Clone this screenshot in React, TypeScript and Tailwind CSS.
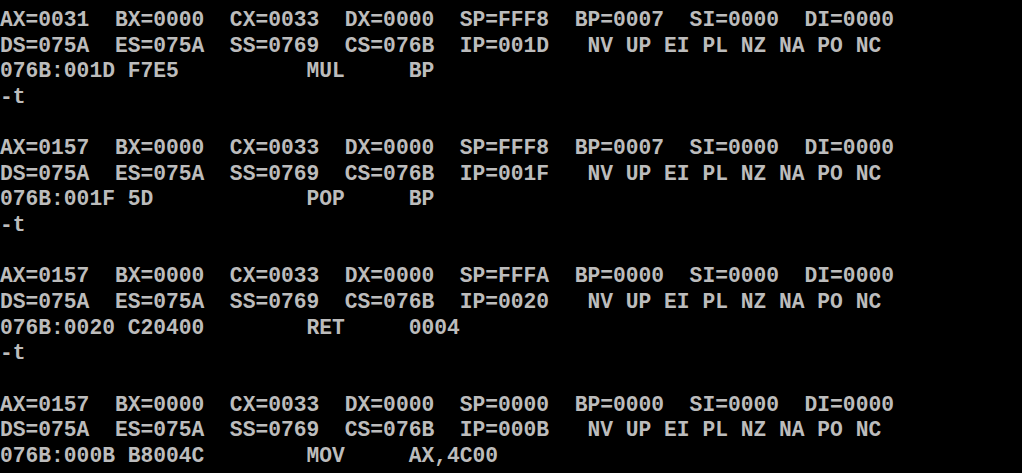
const screen = [
  "AX=0031  BX=0000  CX=0033  DX=0000  SP=FFF8  BP=0007  SI=0000  DI=0000",
  "DS=075A  ES=075A  SS=0769  CS=076B  IP=001D   NV UP EI PL NZ NA PO NC",
  "076B:001D F7E5          MUL     BP",
  "-t",
  "",
  "AX=0157  BX=0000  CX=0033  DX=0000  SP=FFF8  BP=0007  SI=0000  DI=0000",
  "DS=075A  ES=075A  SS=0769  CS=076B  IP=001F   NV UP EI PL NZ NA PO NC",
  "076B:001F 5D            POP     BP",
  "-t",
  "",
  "AX=0157  BX=0000  CX=0033  DX=0000  SP=FFFA  BP=0000  SI=0000  DI=0000",
  "DS=075A  ES=075A  SS=0769  CS=076B  IP=0020   NV UP EI PL NZ NA PO NC",
  "076B:0020 C20400        RET     0004",
  "-t",
  "",
  "AX=0157  BX=0000  CX=0033  DX=0000  SP=0000  BP=0000  SI=0000  DI=0000",
  "DS=075A  ES=075A  SS=0769  CS=076B  IP=000B   NV UP EI PL NZ NA PO NC",
  "076B:000B B8004C        MOV     AX,4C00",
];

export default function App() {
  return (
    <div className="h-[473px] w-[1022px] overflow-hidden bg-black pt-[8px]">
      <div className="font-['Liberation_Mono',monospace] text-[21.29px] font-bold leading-[25.65px] text-[#bcbcbc]">
        {screen.map((line, i) => (
          <div key={i} className="h-[25.65px] whitespace-pre">
            {line}
          </div>
        ))}
      </div>
    </div>
  );
}
